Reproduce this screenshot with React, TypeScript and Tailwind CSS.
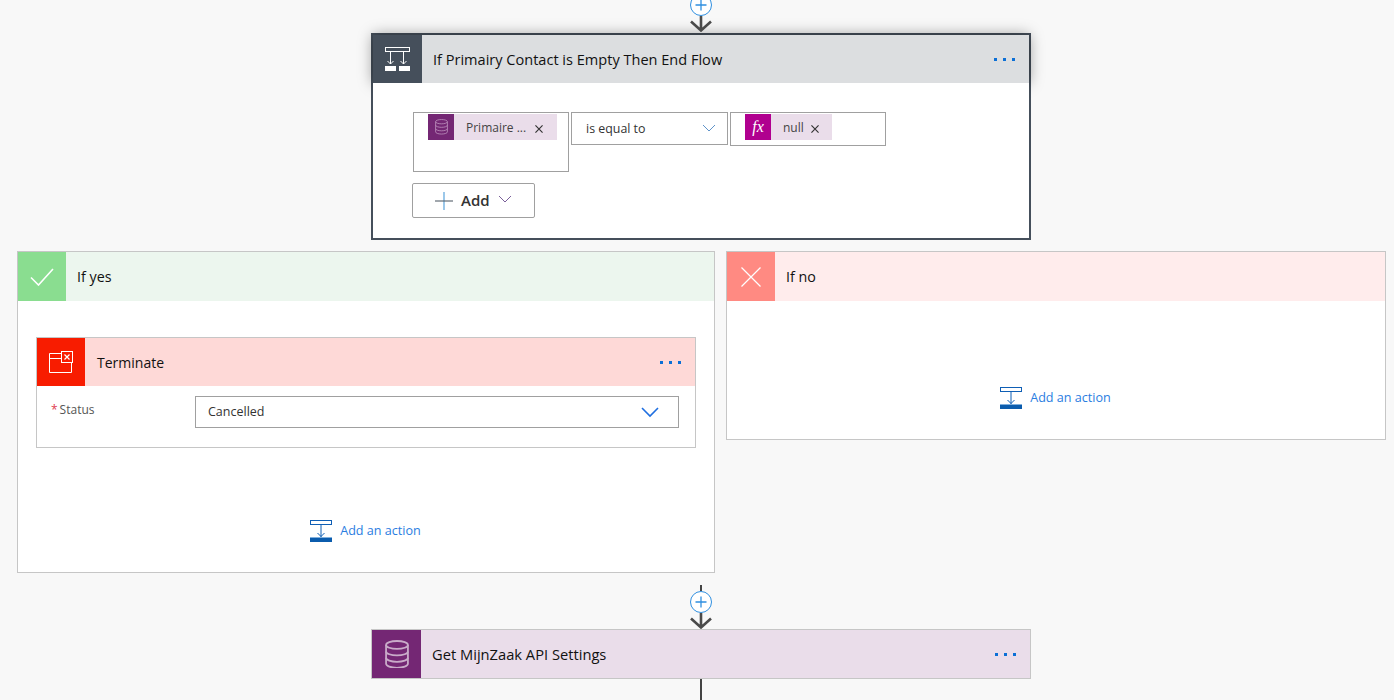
import React from "react";

const font = { fontFamily: '"Open Sans", "Noto Sans", sans-serif' };

function Dots() {
  return (
    <div className="flex gap-[6px] items-center mt-[1px]">
      <div className="w-[3px] h-[3px] bg-[#0b6fd6]" />
      <div className="w-[3px] h-[3px] bg-[#0b6fd6]" />
      <div className="w-[3px] h-[3px] bg-[#0b6fd6]" />
    </div>
  );
}

function Database({ size, stroke, sw = 1.6 }: { size: number; stroke: string; sw?: number }) {
  return (
    <svg width={size} height={size * 1.2} viewBox="0 0 24 29" fill="none" stroke={stroke} strokeWidth={sw}>
      <ellipse cx="12" cy="5" rx="11" ry="4" />
      <path d="M1 5v19c0 2.2 5 4 11 4s11-1.8 11-4V5" />
      <path d="M1 11.5c0 2.2 5 4 11 4s11-1.8 11-4" />
      <path d="M1 18c0 2.2 5 4 11 4s11-1.8 11-4" />
    </svg>
  );
}

function Connector({ height, stem }: { height: number; stem: boolean }) {
  return (
    <div className="relative w-[22px] mx-auto flex flex-col items-center" style={{ height }}>
      {stem && <div className="w-[2px] h-[6px] bg-[#444]" />}
      <div className="w-[22px] h-[22px] rounded-full border border-[#2f8fe0] bg-white flex items-center justify-center shrink-0">
        <svg width="12" height="12" viewBox="0 0 12 12" stroke="#2f8fe0" strokeWidth="1.3">
          <path d="M6 0.5v11M0.5 6h11" />
        </svg>
      </div>
      <svg width="22" height="16" viewBox="0 0 22 16" fill="none" stroke="#4a4a4a" strokeWidth="2.6" className="shrink-0">
        <path d="M11 0v14.5M1 5.5l10 9 10-9" />
      </svg>
    </div>
  );
}

function AddAction() {
  return (
    <div className="flex items-center justify-center gap-2 pr-[1px]">
      <svg width="22" height="22" viewBox="0 0 22 22" fill="none" className="shrink-0">
        <rect x="0.5" y="0.5" width="21" height="4" stroke="#0f5fb5" />
        <path d="M11 5v12M7.5 13l3.5 3.5 3.5-3.5" stroke="#0f5fb5" />
        <rect x="0" y="17" width="22" height="1" fill="#7fb0de" />
        <rect x="0" y="18" width="22" height="4" fill="#0b5cad" />
      </svg>
      <span className="text-[12.6px] text-[#2a7de1] whitespace-nowrap">Add an action</span>
    </div>
  );
}

function Chevron({ w, color, sw = 1 }: { w: number; color: string; sw?: number }) {
  return (
    <svg width={w} height={w / 2 + 2} viewBox={`0 0 ${w} ${w / 2 + 2}`} fill="none" stroke={color} strokeWidth={sw}>
      <path d={`M1 1l${w / 2 - 1} ${w / 2 - 1} ${w / 2 - 1} ${-(w / 2 - 1)}`} />
    </svg>
  );
}

function X({ s = 8 }: { s?: number }) {
  return (
    <svg width={s} height={s} viewBox="0 0 9 9" stroke="#333" strokeWidth="1.3">
      <path d="M0.5 0.5l8 8M8.5 0.5l-8 8" />
    </svg>
  );
}

export default function App() {
  return (
    <div className="w-[1394px] h-[700px] overflow-hidden bg-[#f8f8f8] text-[#111] flex flex-col" style={font}>
      {/* top connector + condition */}
      <div className="ml-[371px] w-[660px] -mt-[6px] flex flex-col shrink-0">
        <div className="relative z-10">
          <Connector height={39} stem={false} />
        </div>
        <div className="border-2 border-[#454f5b] bg-white h-[207px] flex flex-col">
          <div className="h-[48px] bg-[#dcdee0] flex items-center shrink-0 shadow-[0_0_14px_rgba(0,0,0,0.4)]">
            <div className="w-[49px] h-[48px] bg-[#454f5b] flex items-center justify-center shrink-0">
              <svg width="25" height="24" viewBox="0 0 25 24" fill="none" stroke="#fff">
                <rect x="0.5" y="0.5" width="24" height="4" />
                <path d="M5.5 5v12M2.5 14l3 3 3-3M18.5 5v12M15.5 14l3 3 3-3" />
                <rect x="0" y="19" width="11" height="5" fill="#fff" stroke="none" />
                <rect x="14" y="19" width="11" height="5" fill="#fff" stroke="none" />
              </svg>
            </div>
            <div className="ml-[11px] mt-[2px] text-[14.55px] flex-1">If Primairy Contact is Empty Then End Flow</div>
            <div className="mr-[14px]"><Dots /></div>
          </div>
          <div className="relative flex-1 bg-white pl-[40px] pt-[29px] flex flex-col items-start">
            <div className="flex gap-[2px] items-start">
              <div className="w-[156px] h-[60px] border border-[#a0a0a0] pl-[14px] pt-[1px]">
                <div className="w-[129px] h-[26px] bg-[#eaddea] flex items-center">
                  <div className="w-[26px] h-[26px] bg-[#742774] flex items-center justify-center shrink-0">
                    <Database size={13} stroke="#b98bb9" />
                  </div>
                  <span className="ml-[12px] mt-[1px] text-[12px] text-[#444] whitespace-nowrap">Primaire ...</span>
                  <span className="ml-[9px] mt-[3px] flex"><X /></span>
                </div>
              </div>
              <div className="w-[157px] h-[33px] border border-[#a0a0a0] flex items-center justify-between pl-[14px] pr-[11px]">
                <span className="text-[12.4px] mt-[1px] text-[#333]">is equal to</span>
                <Chevron w={14} color="#5f93c9" />
              </div>
              <div className="w-[156px] h-[34px] border border-[#a0a0a0] pl-[14px] pt-[1px]">
                <div className="w-[87px] h-[26px] bg-[#eaddea] flex items-center">
                  <div className="w-[26px] h-[26px] bg-[#b0008f] flex items-center justify-center shrink-0">
                    <span className="text-white text-[16px] italic" style={{ fontFamily: '"Liberation Serif", serif' }}>fx</span>
                  </div>
                  <span className="ml-[12px] mt-[1px] text-[12px] text-[#444]">null</span>
                  <span className="ml-[7px] mt-[3px] flex"><X /></span>
                </div>
              </div>
            </div>
            <div className="mt-[11px] -ml-[1px] w-[123px] h-[35px] border border-[#a0a0a0] rounded-[2px] flex items-center pl-[22px]">
              <svg width="18" height="18" viewBox="0 0 18 18" stroke="#55606b" strokeWidth="1.1" className="shrink-0">
                <path d="M9 0v18" stroke="#4a9ad8" />
                <path d="M0 9h18" />
              </svg>
              <span className="ml-[8px] text-[15px] font-semibold text-[#333]">Add</span>
              <span className="ml-[8px] mb-[3px] flex"><Chevron w={14} color="#7a5f9a" /></span>
            </div>
          </div>
        </div>
      </div>

      {/* branches */}
      <div className="flex items-start gap-[11px] ml-[17px] mt-[11px] shrink-0">
        <div className="w-[698px] h-[322px] border border-[#c6c6c6] bg-white flex flex-col">
          <div className="h-[49px] bg-[#ecf6ee] flex items-center shrink-0">
            <div className="w-[48px] h-[49px] bg-[#8add90] flex items-center justify-center">
              <svg width="24" height="18" viewBox="0 0 24 18" fill="none" stroke="#fff" strokeWidth="1.6">
                <path d="M1 9.5l7.5 7.5L23 1" />
              </svg>
            </div>
            <span className="ml-[11px] text-[14.3px]">If yes</span>
          </div>
          <div className="mx-[18px] mt-[36px] h-[111px] border border-[#c6c6c6] flex flex-col">
            <div className="h-[48px] bg-[#fed9d7] flex items-center shrink-0">
              <div className="w-[48px] h-[48px] bg-[#f81c00] flex items-center justify-center shrink-0">
                <svg width="24" height="22" viewBox="0 0 24 22" fill="none" stroke="#fff" strokeWidth="1">
                  <path d="M12 2.5H0.5v19h22V12M0.5 7.5H12" />
                  <rect x="12.5" y="0.5" width="11" height="11" />
                  <path d="M15.5 3.5l5 5M20.5 3.5l-5 5" strokeWidth="1.2" />
                </svg>
              </div>
              <span className="ml-[12px] text-[14px] flex-1">Terminate</span>
              <div className="mr-[14px]"><Dots /></div>
            </div>
            <div className="flex items-start pl-[14px] pt-[10px]">
              <span className="w-[144px] text-[12px] text-[#555] mt-[5px]"><span className="text-[#e04050] mr-[2px]">*</span>Status</span>
              <div className="w-[484px] h-[32px] border border-[#a0a0a0] flex items-center justify-between pl-[12px] pr-[19px]">
                <span className="text-[12.5px] text-[#333]">Cancelled</span>
                <Chevron w={18} color="#1f6fe0" sw={1.6} />
              </div>
            </div>
          </div>
          <div className="mt-[72px]"><AddAction /></div>
        </div>
        <div className="w-[660px] h-[189px] border border-[#c6c6c6] bg-white flex flex-col">
          <div className="h-[49px] bg-[#ffecec] flex items-center shrink-0">
            <div className="w-[48px] h-[49px] bg-[#ff8a82] flex items-center justify-center">
              <svg width="20" height="20" viewBox="0 0 20 20" stroke="#fff" strokeWidth="1.2">
                <path d="M0.5 0.5l19 19M19.5 0.5l-19 19" />
              </svg>
            </div>
            <span className="ml-[11px] text-[14.3px]">If no</span>
          </div>
          <div className="mt-[86px]"><AddAction /></div>
        </div>
      </div>

      {/* bottom */}
      <div className="ml-[371px] w-[660px] mt-[12px] flex flex-col shrink-0">
        <Connector height={44} stem />
        <div className="h-[50px] border border-[#c6c6c6] bg-[#eaddea] flex items-center shrink-0">
          <div className="w-[49px] h-[48px] bg-[#742774] flex items-center justify-center shrink-0">
            <Database size={24} stroke="#c9abc9" sw={1.8} />
          </div>
          <span className="ml-[11px] text-[14.7px] flex-1">Get MijnZaak API Settings</span>
          <div className="mr-[14px]"><Dots /></div>
        </div>
        <div className="w-[2px] h-[30px] bg-[#444] mx-auto" />
      </div>
    </div>
  );
}
